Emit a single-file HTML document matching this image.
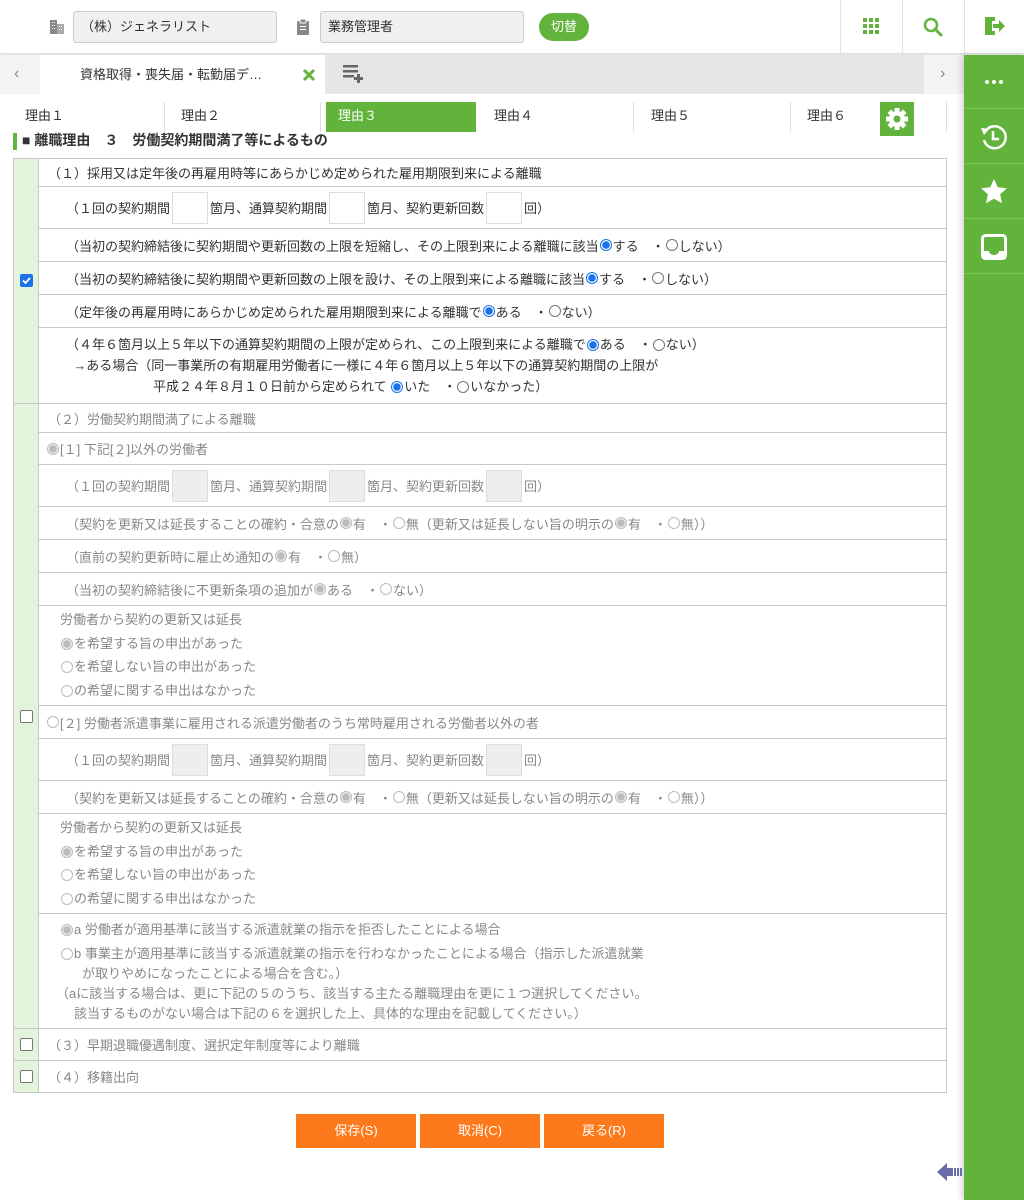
<!DOCTYPE html>
<html><head><meta charset="utf-8">
<style>
*{box-sizing:border-box;margin:0;padding:0}
body{width:1024px;height:1200px;position:relative;background:#fff;font-family:"Liberation Sans","Noto Sans CJK JP",sans-serif;font-size:13px;color:#333;overflow:hidden}
.a{position:absolute}
.hdr{left:0;top:0;width:1024px;height:54px;background:#fff;border-bottom:1px solid #ddd;box-shadow:0 2px 3px rgba(0,0,0,.12)}
.inp{background:#f0f0f0;border:1px solid #ccc;border-radius:3px;height:32px;top:11px;padding:0 7px;line-height:30px;font-size:13px}
.tabbar{left:0;top:55px;width:964px;height:39px;background:#e6e6e6}
.side{left:964px;top:55px;width:60px;height:1145px;background:#62b33c;box-shadow:-3px 0 5px rgba(0,0,0,.15)}
.sitem{position:absolute;left:0;width:60px;height:54px;border-bottom:1px solid #7dc25c;display:flex;align-items:center;justify-content:center}
.rt{top:102px;height:30px;line-height:28px;padding-left:12px;font-size:13px;border-right:1px solid #ddd}
.row{position:absolute;left:39px;width:907px;border-top:1px solid #c8c8c8;display:flex;align-items:center;white-space:nowrap}
.g{color:#888}
.box{display:inline-block;width:36px;height:32px;border:1px solid #ddd;background:#fff;vertical-align:middle;margin:0 2px}
.g .box{background:#eee}
.r{display:inline-block;width:12px;height:12px;border:1px solid #777;border-radius:50%;vertical-align:-2px;margin:0 1px;background:#fff}
.r.on{border:1px solid #1a73e8;background:radial-gradient(circle,#1a73e8 0 3.5px,#fff 4px)}
.g .r{border-color:#bbb}
.g .r.on{border-color:#bbb;background:radial-gradient(circle,#bbb 0 3.5px,#eee 4px)}
.cb{position:absolute;left:20px;width:13px;height:13px;border:1px solid #767676;border-radius:2px;background:#fff}
.btn{top:1114px;width:120px;height:34px;background:#fd7a1c;color:#fff;font-size:13px;text-align:center;line-height:34px}
</style></head><body>
<div class="a hdr"></div>
<svg class="a" style="left:49px;top:19px" width="16" height="16" viewBox="0 0 16 16"><rect x="1" y="1" width="7" height="14" fill="#888"/><rect x="8" y="5" width="7" height="10" fill="#aaa"/><g fill="#fff"><rect x="3" y="3" width="1" height="1"/><rect x="5" y="3" width="1" height="1"/><rect x="3" y="6" width="1" height="1"/><rect x="5" y="6" width="1" height="1"/><rect x="3" y="9" width="1" height="1"/><rect x="5" y="9" width="1" height="1"/><rect x="10" y="7" width="1" height="1"/><rect x="12" y="7" width="1" height="1"/><rect x="10" y="10" width="1" height="1"/><rect x="12" y="10" width="1" height="1"/></g></svg>
<div class="a inp" style="left:73px;width:204px">（株）ジェネラリスト</div>
<svg class="a" style="left:297px;top:19px" width="12" height="16" viewBox="0 0 12 16"><rect x="0" y="2" width="12" height="14" rx="1" fill="#888"/><rect x="3" y="0" width="6" height="4" rx="1" fill="#888" stroke="#fff" stroke-width="1"/><g fill="#fff"><rect x="3" y="7" width="6" height="1"/><rect x="3" y="10" width="6" height="1"/></g></svg>
<div class="a inp" style="left:320px;width:204px">業務管理者</div>
<div class="a" style="left:539px;top:13px;width:50px;height:28px;border-radius:14px;background:#62b33c;color:#fff;text-align:center;line-height:28px;font-size:13px">切替</div>
<div class="a" style="left:840px;top:0;width:1px;height:54px;background:#e3e3e3"></div>
<div class="a" style="left:902px;top:0;width:1px;height:54px;background:#e3e3e3"></div>
<div class="a" style="left:964px;top:0;width:1px;height:54px;background:#e3e3e3"></div>
<svg class="a" style="left:863px;top:18px" width="17" height="17" viewBox="0 0 17 17" fill="#62b33c"><rect x="0" y="0" width="4" height="4"/><rect x="6" y="0" width="4" height="4"/><rect x="12" y="0" width="4" height="4"/><rect x="0" y="6" width="4" height="4"/><rect x="6" y="6" width="4" height="4"/><rect x="12" y="6" width="4" height="4"/><rect x="0" y="12" width="4" height="4"/><rect x="6" y="12" width="4" height="4"/><rect x="12" y="12" width="4" height="4"/></svg>
<svg class="a" style="left:923px;top:17px" width="20" height="20" viewBox="0 0 20 20"><circle cx="8" cy="8" r="6" fill="none" stroke="#62b33c" stroke-width="2.5"/><path d="M12 12l6 6" stroke="#62b33c" stroke-width="3" stroke-linecap="round"/></svg>
<svg class="a" style="left:984px;top:16px" width="22" height="20" viewBox="0 0 22 20"><path d="M1 1h10v4h-3v10h3v4H1z" fill="#62b33c"/><path d="M9 8h6V4l6 6-6 6v-4H9z" fill="#62b33c"/></svg>

<div class="a tabbar"></div>
<div class="a" style="left:0;top:55px;width:40px;height:39px;background:#f3f3f3;color:#888;font-size:16px;line-height:38px;padding-left:14px">‹</div>
<div class="a" style="left:40px;top:55px;width:285px;height:39px;background:#fff"></div>
<div class="a" style="left:80px;top:55px;font-size:13px;line-height:39px;white-space:nowrap">資格取得・喪失届・転勤届デ…</div>
<svg class="a" style="left:302px;top:68px" width="14" height="14" viewBox="0 0 14 14"><path d="M2 2l10 10M12 2L2 12" stroke="#62b33c" stroke-width="3"/></svg>
<svg class="a" style="left:343px;top:65px" width="25" height="18" viewBox="0 0 25 18" fill="#666"><rect x="0" y="0" width="15" height="2.5"/><rect x="0" y="5" width="15" height="2.5"/><rect x="0" y="10" width="11" height="2.5"/><rect x="14" y="9" width="3" height="9"/><rect x="11" y="12" width="9" height="3"/></svg>
<div class="a" style="left:924px;top:55px;width:40px;height:39px;background:#f3f3f3;color:#888;font-size:16px;line-height:38px;padding-left:16px">›</div>

<div class="a side">
 <div class="sitem" style="top:0"><svg width="18" height="4"><circle cx="2" cy="2" r="2" fill="#fff"/><circle cx="9" cy="2" r="2" fill="#fff"/><circle cx="16" cy="2" r="2" fill="#fff"/></svg></div>
 <div class="sitem" style="top:55px"><svg width="28" height="28" viewBox="0 0 28 28"><path d="M5 9A11 11 0 1 1 4 17" fill="none" stroke="#fff" stroke-width="2.5"/><path d="M1 5l8 1-5 6z" fill="#fff"/><path d="M13 8v8h6" fill="none" stroke="#fff" stroke-width="2.5"/></svg></div>
 <div class="sitem" style="top:110px"><svg width="26" height="25" viewBox="0 0 26 25"><path d="M13 0l3.8 8.3 9 1-6.7 6.1 1.9 8.9L13 19.8 5 24.3l1.9-8.9L.2 9.3l9-1z" fill="#fff"/></svg></div>
 <div class="sitem" style="top:165px"><svg width="26" height="26" viewBox="0 0 26 26"><rect x="1.5" y="1.5" width="23" height="23" rx="3" fill="none" stroke="#fff" stroke-width="3"/><path d="M1 17h7a5 4 0 0 0 10 0h7v8H1z" fill="#fff"/></svg></div>
</div>

<div class="a rt" style="left:13px;width:152px">理由１</div>
<div class="a rt" style="left:169px;width:152px">理由２</div>
<div class="a rt" style="left:326px;width:150px;background:#62b33c;color:#fff;border:none">理由３</div>
<div class="a rt" style="left:482px;width:152px">理由４</div>
<div class="a rt" style="left:639px;width:152px">理由５</div>
<div class="a rt" style="left:795px;width:152px">理由６</div>
<div class="a" style="left:880px;top:102px;width:34px;height:34px;background:#62b33c"></div>
<svg class="a" style="left:885px;top:107px" width="24" height="24" viewBox="0 0 24 24"><g fill="#fff" transform="translate(12 12)"><rect x="-2.5" y="-11" width="5" height="22"/><rect x="-2.5" y="-11" width="5" height="22" transform="rotate(45)"/><rect x="-2.5" y="-11" width="5" height="22" transform="rotate(90)"/><rect x="-2.5" y="-11" width="5" height="22" transform="rotate(135)"/><circle r="8"/></g><circle cx="12" cy="12" r="3.5" fill="#62b33c"/></svg>

<div class="a" style="left:13px;top:133px;width:4px;height:17px;background:#62b33c"></div>
<div class="a" style="left:22px;top:131px;font-size:14px;font-weight:bold;line-height:18px;white-space:nowrap">■ 離職理由　３　労働契約期間満了等によるもの</div>

<div class="a" style="left:13px;top:158px;width:934px;height:935px;border:1px solid #c8c8c8"></div>
<div class="a" style="left:14px;top:159px;width:25px;height:933px;background:#e3f4dc;border-right:1px solid #c8c8c8"></div>
<div class="a" style="left:13px;top:403px;width:27px;height:1px;background:#c8c8c8"></div>
<div class="a" style="left:13px;top:1028px;width:27px;height:1px;background:#c8c8c8"></div>
<div class="a" style="left:13px;top:1060px;width:27px;height:1px;background:#c8c8c8"></div>
<div class="cb" style="top:274px;background:#1a73e8;border-color:#1a73e8"><svg width="11" height="11" viewBox="0 0 11 11" style="position:absolute;left:0;top:0"><path d="M2 5.5l2.5 2.5 4.5-5" fill="none" stroke="#fff" stroke-width="1.8"/></svg></div>
<div class="cb" style="top:710px"></div>
<div class="cb" style="top:1038px"></div>
<div class="cb" style="top:1070px"></div>

<div class="row" style="top:158px;height:28px;border-top:none;padding-left:9px">（１）採用又は定年後の再雇用時等にあらかじめ定められた雇用期限到来による離職</div>
<div class="row" style="top:186px;height:42px;padding-left:27px">（１回の契約期間<span class="box"></span>箇月、通算契約期間<span class="box"></span>箇月、契約更新回数<span class="box"></span>回）</div>
<div class="row" style="top:228px;height:33px;padding-left:27px">（当初の契約締結後に契約期間や更新回数の上限を短縮し、その上限到来による離職に該当<span class="r on"></span>する　・<span class="r"></span>しない）</div>
<div class="row" style="top:261px;height:33px;padding-left:27px">（当初の契約締結後に契約期間や更新回数の上限を設け、その上限到来による離職に該当<span class="r on"></span>する　・<span class="r"></span>しない）</div>
<div class="row" style="top:294px;height:33px;padding-left:27px">（定年後の再雇用時にあらかじめ定められた雇用期限到来による離職で<span class="r on"></span>ある　・<span class="r"></span>ない）</div>
<div class="row" style="top:327px;height:76px;padding-left:27px;display:block;line-height:21px;padding-top:6px">（４年６箇月以上５年以下の通算契約期間の上限が定められ、この上限到来による離職で<span class="r on"></span>ある　・<span class="r"></span>ない）<br>&nbsp;&nbsp;→ある場合（同一事業所の有期雇用労働者に一様に４年６箇月以上５年以下の通算契約期間の上限が<br><span style="padding-left:87px">平成２４年８月１０日前から定められて <span class="r on"></span>いた　・<span class="r"></span>いなかった）</span></div>

<div class="g">
<div class="row" style="top:403px;height:29px;padding-left:9px">（２）労働契約期間満了による離職</div>
<div class="row" style="top:432px;height:32px;padding-left:7px"><span class="r on"></span>[１] 下記[２]以外の労働者</div>
<div class="row" style="top:464px;height:42px;padding-left:27px">（１回の契約期間<span class="box"></span>箇月、通算契約期間<span class="box"></span>箇月、契約更新回数<span class="box"></span>回）</div>
<div class="row" style="top:506px;height:33px;padding-left:27px">（契約を更新又は延長することの確約・合意の<span class="r on"></span>有　・<span class="r"></span>無（更新又は延長しない旨の明示の <span class="r on"></span>有　・<span class="r"></span>無））</div>
<div class="row" style="top:539px;height:33px;padding-left:27px">（直前の契約更新時に雇止め通知の <span class="r on"></span>有　・<span class="r"></span>無）</div>
<div class="row" style="top:572px;height:33px;padding-left:27px">（当初の契約締結後に不更新条項の追加が <span class="r on"></span>ある　・<span class="r"></span>ない）</div>
<div class="row" style="top:605px;height:100px;padding-left:21px;display:block;line-height:23.5px;padding-top:2px">労働者から契約の更新又は延長<br><span class="r on"></span>を希望する旨の申出があった<br><span class="r"></span>を希望しない旨の申出があった<br><span class="r"></span>の希望に関する申出はなかった</div>
<div class="row" style="top:705px;height:33px;padding-left:7px"><span class="r"></span>[２] 労働者派遣事業に雇用される派遣労働者のうち常時雇用される労働者以外の者</div>
<div class="row" style="top:738px;height:42px;padding-left:27px">（１回の契約期間<span class="box"></span>箇月、通算契約期間<span class="box"></span>箇月、契約更新回数<span class="box"></span>回）</div>
<div class="row" style="top:780px;height:33px;padding-left:27px">（契約を更新又は延長することの確約・合意の<span class="r on"></span>有　・<span class="r"></span>無（更新又は延長しない旨の明示の <span class="r on"></span>有　・<span class="r"></span>無））</div>
<div class="row" style="top:813px;height:100px;padding-left:21px;display:block;line-height:23.5px;padding-top:2px">労働者から契約の更新又は延長<br><span class="r on"></span>を希望する旨の申出があった<br><span class="r"></span>を希望しない旨の申出があった<br><span class="r"></span>の希望に関する申出はなかった</div>
<div class="row" style="top:913px;height:115px;padding-left:21px;display:block;line-height:20px;padding-top:6px"><span class="r on"></span>a 労働者が適用基準に該当する派遣就業の指示を拒否したことによる場合<br><div style="margin-top:4px"><span class="r"></span>b 事業主が適用基準に該当する派遣就業の指示を行わなかったことによる場合（指示した派遣就業</div><span style="padding-left:22px">が取りやめになったことによる場合を含む。）</span><br><span style="margin-left:-4px">（aに該当する場合は、更に下記の５のうち、該当する主たる離職理由を更に１つ選択してください。</span><br><span style="padding-left:14px">該当するものがない場合は下記の６を選択した上、具体的な理由を記載してください。）</span></div>
<div class="row" style="top:1028px;height:32px;padding-left:9px">（３）早期退職優遇制度、選択定年制度等により離職</div>
<div class="row" style="top:1060px;height:32px;padding-left:9px">（４）移籍出向</div>
</div>

<div class="a btn" style="left:296px">保存(S)</div>
<div class="a btn" style="left:420px">取消(C)</div>
<div class="a btn" style="left:544px">戻る(R)</div>

<svg class="a" style="left:937px;top:1162px" width="26" height="20" viewBox="0 0 26 20" fill="#6b6bab"><path d="M0 10L10 1v5h6v8h-6v5z"/><rect x="17" y="6" width="2" height="8"/><rect x="20" y="6" width="2" height="8"/><rect x="23" y="6" width="2" height="8"/></svg>
</body></html>
